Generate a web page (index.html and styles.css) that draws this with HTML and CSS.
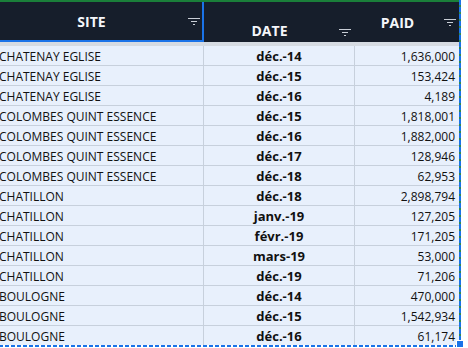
FILE: index.html
```html
<!DOCTYPE html>
<html lang="fr">
<head>
    <meta charset="UTF-8">
    <meta name="viewport" content="width=device-width, initial-scale=1.0">
    <title>Paiements par site</title>
    <link rel="stylesheet" href="styles.css">
</head>
<body>
    <div class="sheet">
        <!-- Header row -->
        <div class="head">
            <div class="hcell site selected">
                <span class="label">SITE</span>
                <svg class="filter" width="12" height="7" viewBox="0 0 12 7"><path d="M0 0.5H12M3 3.5H9M5 6.5H7" stroke="#c9ced6" stroke-width="1"/></svg>
            </div>
            <div class="hcell date">
                <span class="label">DATE</span>
                <svg class="filter" width="12" height="7" viewBox="0 0 12 7"><path d="M0 0.5H12M3 3.5H9M5 6.5H7" stroke="#c9ced6" stroke-width="1"/></svg>
            </div>
            <div class="hcell paid">
                <span class="label">PAID</span>
                <svg class="filter" width="12" height="7" viewBox="0 0 12 7"><path d="M0 0.5H12M3 3.5H9M5 6.5H7" stroke="#c9ced6" stroke-width="1"/></svg>
            </div>
        </div>
        <div class="band"></div>

        <!-- Data rows -->
        <div class="rows">
            <div class="row"><div class="cell site">CHATENAY EGLISE</div><div class="cell date">déc.-14</div><div class="cell paid">1,636,000</div></div>
            <div class="row"><div class="cell site">CHATENAY EGLISE</div><div class="cell date">déc.-15</div><div class="cell paid">153,424</div></div>
            <div class="row"><div class="cell site">CHATENAY EGLISE</div><div class="cell date">déc.-16</div><div class="cell paid">4,189</div></div>
            <div class="row"><div class="cell site">COLOMBES QUINT ESSENCE</div><div class="cell date">déc.-15</div><div class="cell paid">1,818,001</div></div>
            <div class="row"><div class="cell site">COLOMBES QUINT ESSENCE</div><div class="cell date">déc.-16</div><div class="cell paid">1,882,000</div></div>
            <div class="row"><div class="cell site">COLOMBES QUINT ESSENCE</div><div class="cell date">déc.-17</div><div class="cell paid">128,946</div></div>
            <div class="row"><div class="cell site">COLOMBES QUINT ESSENCE</div><div class="cell date">déc.-18</div><div class="cell paid">62,953</div></div>
            <div class="row"><div class="cell site">CHATILLON</div><div class="cell date">déc.-18</div><div class="cell paid">2,898,794</div></div>
            <div class="row"><div class="cell site">CHATILLON</div><div class="cell date">janv.-19</div><div class="cell paid">127,205</div></div>
            <div class="row"><div class="cell site">CHATILLON</div><div class="cell date">févr.-19</div><div class="cell paid">171,205</div></div>
            <div class="row"><div class="cell site">CHATILLON</div><div class="cell date">mars-19</div><div class="cell paid">53,000</div></div>
            <div class="row"><div class="cell site">CHATILLON</div><div class="cell date">déc.-19</div><div class="cell paid">71,206</div></div>
            <div class="row"><div class="cell site">BOULOGNE</div><div class="cell date">déc.-14</div><div class="cell paid">470,000</div></div>
            <div class="row"><div class="cell site">BOULOGNE</div><div class="cell date">déc.-15</div><div class="cell paid">1,542,934</div></div>
            <div class="row"><div class="cell site">BOULOGNE</div><div class="cell date">déc.-16</div><div class="cell paid">61,174</div></div>
        </div>

        <!-- Copy marquee and fill handle -->
        <div class="marquee"></div>
        <div class="handle"></div>
    </div>
</body>
</html>
```

FILE: styles.css
```css
body {
    margin: 0;
    background: #fff;
    font-family: 'Open Sans', 'Liberation Sans', sans-serif;
    overflow: hidden;
}

.sheet {
    position: relative;
    width: 462px;
    height: 347px;
    margin-left: -1px;
    background: #e8f0fc;
}

.head {
    display: grid;
    grid-template-columns: 205px 151px 106px;
    height: 40px;
    border-top: 2px solid #1a7f3a;
    background: #161e2b;
}

.hcell {
    display: flex;
    align-items: center;
    color: #f4f6fa;
    font-weight: bold;
    font-size: 14px;
    padding-right: 4px;
}

.hcell .label {
    flex: 1;
    text-align: center;
}

.hcell .filter {
    flex: none;
    margin-left: 4px;
}

.hcell.selected {
    border-right: 2px solid #1a73e8;
    border-bottom: 2px solid #1a73e8;
    padding-right: 2px;
}

.hcell.date {
    align-items: flex-end;
    padding-bottom: 4px;
}

.hcell.date .label {
    line-height: 14px;
}

.hcell.date .filter {
    margin-bottom: 2px;
}

.hcell.paid {
    padding-right: 5px;
}

.band {
    height: 4px;
    background: #d6dbe2;
}

.row {
    display: grid;
    grid-template-columns: 205px 151px 106px;
    height: 20px;
    border-bottom: 1px solid #c7d0dc;
    box-sizing: border-box;
}

.cell {
    font-size: 12px;
    line-height: 19px;
    padding-top: 1px;
    color: #111;
    white-space: nowrap;
    overflow: hidden;
}

.cell.site {
    border-right: 1px solid #c7d0dc;
}

.cell.date {
    text-align: center;
    font-weight: bold;
    font-size: 13px;
    border-right: 1px solid #c7d0dc;
}

.cell.paid {
    text-align: right;
    padding-right: 6px;
}

.marquee {
    position: absolute;
    right: 0;
    bottom: 0;
    width: 2px;
    height: 347px;
    background: repeating-linear-gradient(to bottom, #1a73e8 0 5px, #2e8b57 5px 7px);
}

.marquee::after {
    content: "";
    position: absolute;
    right: 0;
    bottom: 0;
    width: 462px;
    height: 2px;
    background: repeating-linear-gradient(to right, #1a73e8 0 4px, #fff 4px 6px);
}

.handle {
    position: absolute;
    right: -2px;
    bottom: 0;
    width: 6px;
    height: 6px;
    background: #1a73e8;
    border: 1px solid #fff;
    border-right: none;
    border-bottom: none;
}
```
